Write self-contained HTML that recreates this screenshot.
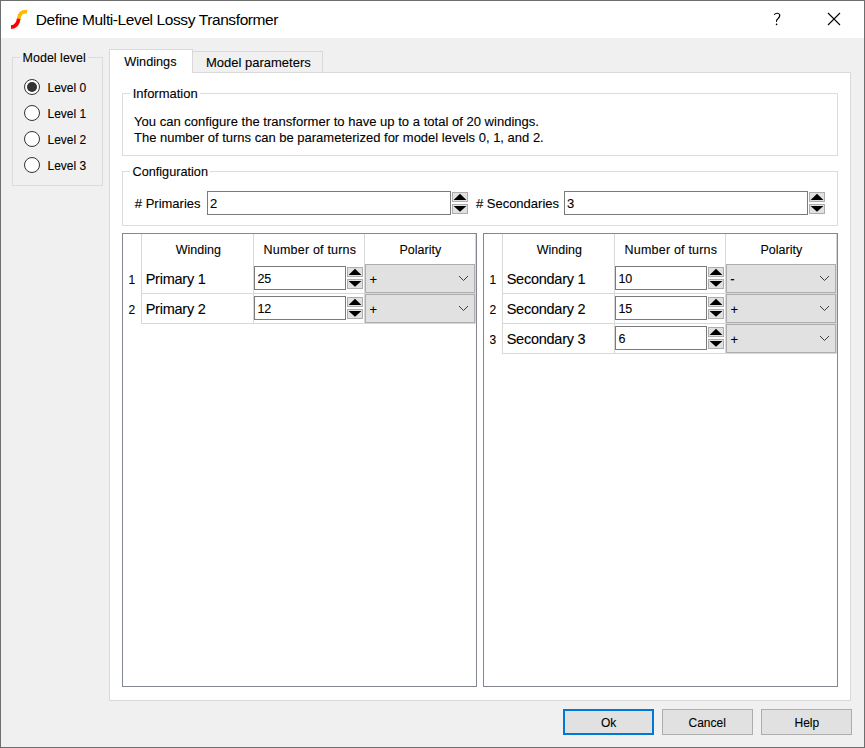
<!DOCTYPE html>
<html><head><meta charset="utf-8">
<style>
*{margin:0;padding:0;box-sizing:border-box}
html,body{width:865px;height:748px;overflow:hidden;background:#f0f0f0}
body{position:relative;font-family:"Liberation Sans",sans-serif;font-size:13px;color:#000}
.a{position:absolute}
.t{position:absolute;white-space:nowrap;line-height:1;-webkit-text-stroke:0.1px #000}
</style></head><body>
<div class="a" style="left:0px;top:0px;width:865px;height:748px;border:1px solid #6e6e6e;background:#f0f0f0"></div>
<div class="a" style="left:1px;top:1px;width:863px;height:37px;background:#fff"></div>
<svg class="a" style="left:10px;top:9px" width="18" height="21" viewBox="0 0 18 21">
<path d="M17 2.9 C12.8 2.2 9.6 3.6 8.7 9.9" stroke="#ffb900" stroke-width="3.7" fill="none" stroke-linecap="butt"/>
<path d="M8.7 9.8 C8.1 15 6 17.9 1 18.1" stroke="#ff0000" stroke-width="3.7" fill="none" stroke-linecap="butt"/>
</svg>
<div class="t" style="left:35.8px;top:11.88px;font-size:15.5px;letter-spacing:-0.4px;-webkit-text-stroke:0;">Define Multi-Level Lossy Transformer</div>
<svg class="a" style="left:766px;top:8px" width="24" height="24"><path d="M8.4 6.5 C9.6 5 12.6 4.6 13.6 6.6 C14.4 8.4 12.7 9.9 11.6 11 C10.6 12 10.3 12.6 10.5 13.4" stroke="#000" stroke-width="1.1" fill="none" stroke-linecap="round"/><circle cx="10.6" cy="16.3" r="0.85" fill="#000"/></svg>
<svg class="a" style="left:827px;top:12px" width="14" height="14" viewBox="0 0 14 14"><path d="M1 1L13 13M13 1L1 13" stroke="#000" stroke-width="1.1"/></svg>
<div class="a" style="left:12px;top:57px;width:91px;height:129px;border:1px solid #dcdcdc"></div>
<div class="a" style="left:20px;top:50px;width:68px;height:15px;background:#f0f0f0"></div>
<div class="t" style="left:22.6px;top:52.42px;font-size:12.5px;">Model level</div>
<div class="a" style="left:24px;top:79px;width:16px;height:16px;border:1px solid #333;border-radius:50%;background:#fff"></div>
<div class="a" style="left:27px;top:82px;width:10px;height:10px;border-radius:50%;background:#333"></div>
<div class="t" style="left:47.5px;top:82.34px;font-size:12px;">Level 0</div>
<div class="a" style="left:24px;top:105px;width:16px;height:16px;border:1px solid #333;border-radius:50%;background:#fff"></div>
<div class="t" style="left:47.5px;top:108.34px;font-size:12px;">Level 1</div>
<div class="a" style="left:24px;top:131px;width:16px;height:16px;border:1px solid #333;border-radius:50%;background:#fff"></div>
<div class="t" style="left:47.5px;top:134.34px;font-size:12px;">Level 2</div>
<div class="a" style="left:24px;top:157px;width:16px;height:16px;border:1px solid #333;border-radius:50%;background:#fff"></div>
<div class="t" style="left:47.5px;top:160.34px;font-size:12px;">Level 3</div>
<div class="a" style="left:109px;top:72px;width:742px;height:629px;background:#fff;border:1px solid #d9d9d9"></div>
<div class="a" style="left:192px;top:51px;width:131px;height:22px;background:#f0f0f0;border:1px solid #d9d9d9"></div>
<div class="t" style="left:206px;top:55.50px;font-size:13px;">Model parameters</div>
<div class="a" style="left:109px;top:49px;width:84px;height:24px;background:#fff;border:1px solid #d9d9d9;border-bottom:none"></div>
<div class="t" style="left:124.3px;top:56.25px;font-size:12.7px;">Windings</div>
<div class="a" style="left:122px;top:93px;width:716px;height:63px;border:1px solid #dcdcdc"></div>
<div class="a" style="left:130px;top:85px;width:70px;height:16px;background:#fff"></div>
<div class="t" style="left:132.7px;top:87.00px;font-size:13px;">Information</div>
<div class="t" style="left:134px;top:114.95px;font-size:13.05px;">You can configure the transformer to have up to a total of 20 windings.</div>
<div class="t" style="left:134px;top:131.00px;font-size:13.0px;">The number of turns can be parameterized for model levels 0, 1, and 2.</div>
<div class="a" style="left:122px;top:171px;width:716px;height:55px;border:1px solid #dcdcdc"></div>
<div class="a" style="left:130px;top:163px;width:80px;height:16px;background:#fff"></div>
<div class="t" style="left:132.5px;top:165.75px;font-size:12.7px;">Configuration</div>
<div class="t" style="left:134.8px;top:196.50px;font-size:13px;"># Primaries</div>
<div class="a" style="left:207px;top:191px;width:244px;height:24px;border:1px solid #7a7a7a;background:#fff"></div>
<div class="t" style="left:210px;top:196.50px;font-size:13px;">2</div>
<div class="a" style="left:452px;top:192px;width:16px;height:10px;background:#e1e1e1;border:1px solid #adadad"></div>
<div class="a" style="left:452px;top:204px;width:16px;height:10px;background:#e1e1e1;border:1px solid #adadad"></div>
<svg class="a" style="left:452px;top:192px" width="16" height="22"><path d="M1.6 8 L8.0 1.8 L14.4 8Z" fill="#000"/><path d="M1.6 14 L8.0 19.8 L14.4 14Z" fill="#000"/></svg>
<div class="t" style="left:475.9px;top:196.50px;font-size:13px;"># Secondaries</div>
<div class="a" style="left:564px;top:191px;width:244px;height:24px;border:1px solid #7a7a7a;background:#fff"></div>
<div class="t" style="left:567px;top:196.50px;font-size:13px;">3</div>
<div class="a" style="left:809px;top:192px;width:16px;height:10px;background:#e1e1e1;border:1px solid #adadad"></div>
<div class="a" style="left:809px;top:204px;width:16px;height:10px;background:#e1e1e1;border:1px solid #adadad"></div>
<svg class="a" style="left:809px;top:192px" width="16" height="22"><path d="M1.6 8 L8.0 1.8 L14.4 8Z" fill="#000"/><path d="M1.6 14 L8.0 19.8 L14.4 14Z" fill="#000"/></svg>
<div class="a" style="left:122px;top:233px;width:355px;height:454px;border:1px solid #828790;background:#fff"></div>
<div class="a" style="left:141px;top:234px;width:1px;height:90px;background:#d8d8d8"></div>
<div class="a" style="left:253px;top:234px;width:1px;height:90px;background:#d8d8d8"></div>
<div class="a" style="left:364px;top:234px;width:1px;height:90px;background:#d8d8d8"></div>
<div class="a" style="left:475px;top:234px;width:1px;height:90px;background:#d8d8d8"></div>
<div class="t" style="left:175.8px;top:243.92px;font-size:12.5px;">Winding</div>
<div class="t" style="left:263.6px;top:243.92px;font-size:12.5px;letter-spacing:0.2px;">Number of turns</div>
<div class="t" style="left:399.5px;top:243.92px;font-size:12.5px;">Polarity</div>
<div class="a" style="left:141px;top:293px;width:335px;height:1px;background:#d8d8d8"></div>
<div class="t" style="left:128.4px;top:273.84px;font-size:12px;">1</div>
<div class="t" style="left:145.7px;top:271.73px;font-size:14.5px;letter-spacing:-0.25px;">Primary 1</div>
<div class="a" style="left:254px;top:266px;width:92px;height:24px;border:1px solid #7a7a7a;background:#fff"></div>
<div class="t" style="left:257.4px;top:273.42px;font-size:12.5px;">25</div>
<div class="a" style="left:347px;top:267px;width:16px;height:10px;background:#e1e1e1;border:1px solid #adadad"></div>
<div class="a" style="left:347px;top:279px;width:16px;height:10px;background:#e1e1e1;border:1px solid #adadad"></div>
<svg class="a" style="left:347px;top:267px" width="16" height="22"><path d="M1.6 8 L8.0 1.8 L14.4 8Z" fill="#000"/><path d="M1.6 14 L8.0 19.8 L14.4 14Z" fill="#000"/></svg>
<div class="a" style="left:365px;top:264px;width:110px;height:29px;background:#e1e1e1;border:1px solid #adadad"></div>
<div class="t" style="left:369.5px;top:272.50px;font-size:13px;">+</div>
<svg class="a" style="left:458px;top:275px" width="11" height="7"><path d="M1 1 L5.5 5.5 L10 1" stroke="#3c3c3c" stroke-width="1" fill="none"/></svg>
<div class="a" style="left:141px;top:323px;width:335px;height:1px;background:#d8d8d8"></div>
<div class="t" style="left:128.4px;top:303.84px;font-size:12px;">2</div>
<div class="t" style="left:145.7px;top:301.73px;font-size:14.5px;letter-spacing:-0.25px;">Primary 2</div>
<div class="a" style="left:254px;top:296px;width:92px;height:24px;border:1px solid #7a7a7a;background:#fff"></div>
<div class="t" style="left:257.4px;top:303.42px;font-size:12.5px;">12</div>
<div class="a" style="left:347px;top:297px;width:16px;height:10px;background:#e1e1e1;border:1px solid #adadad"></div>
<div class="a" style="left:347px;top:309px;width:16px;height:10px;background:#e1e1e1;border:1px solid #adadad"></div>
<svg class="a" style="left:347px;top:297px" width="16" height="22"><path d="M1.6 8 L8.0 1.8 L14.4 8Z" fill="#000"/><path d="M1.6 14 L8.0 19.8 L14.4 14Z" fill="#000"/></svg>
<div class="a" style="left:365px;top:294px;width:110px;height:29px;background:#e1e1e1;border:1px solid #adadad"></div>
<div class="t" style="left:369.5px;top:302.50px;font-size:13px;">+</div>
<svg class="a" style="left:458px;top:305px" width="11" height="7"><path d="M1 1 L5.5 5.5 L10 1" stroke="#3c3c3c" stroke-width="1" fill="none"/></svg>
<div class="a" style="left:483px;top:233px;width:355px;height:454px;border:1px solid #828790;background:#fff"></div>
<div class="a" style="left:502px;top:234px;width:1px;height:120px;background:#d8d8d8"></div>
<div class="a" style="left:614px;top:234px;width:1px;height:120px;background:#d8d8d8"></div>
<div class="a" style="left:725px;top:234px;width:1px;height:120px;background:#d8d8d8"></div>
<div class="a" style="left:836px;top:234px;width:1px;height:120px;background:#d8d8d8"></div>
<div class="t" style="left:536.8px;top:243.92px;font-size:12.5px;">Winding</div>
<div class="t" style="left:624.6px;top:243.92px;font-size:12.5px;letter-spacing:0.2px;">Number of turns</div>
<div class="t" style="left:760.5px;top:243.92px;font-size:12.5px;">Polarity</div>
<div class="a" style="left:502px;top:293px;width:335px;height:1px;background:#d8d8d8"></div>
<div class="t" style="left:489.4px;top:273.84px;font-size:12px;">1</div>
<div class="t" style="left:506.7px;top:271.73px;font-size:14.5px;letter-spacing:-0.25px;">Secondary 1</div>
<div class="a" style="left:615px;top:266px;width:92px;height:24px;border:1px solid #7a7a7a;background:#fff"></div>
<div class="t" style="left:618.4px;top:273.42px;font-size:12.5px;">10</div>
<div class="a" style="left:708px;top:267px;width:16px;height:10px;background:#e1e1e1;border:1px solid #adadad"></div>
<div class="a" style="left:708px;top:279px;width:16px;height:10px;background:#e1e1e1;border:1px solid #adadad"></div>
<svg class="a" style="left:708px;top:267px" width="16" height="22"><path d="M1.6 8 L8.0 1.8 L14.4 8Z" fill="#000"/><path d="M1.6 14 L8.0 19.8 L14.4 14Z" fill="#000"/></svg>
<div class="a" style="left:726px;top:264px;width:110px;height:29px;background:#e1e1e1;border:1px solid #adadad"></div>
<div class="t" style="left:730.2px;top:271.60px;font-size:13px;">-</div>
<svg class="a" style="left:819px;top:275px" width="11" height="7"><path d="M1 1 L5.5 5.5 L10 1" stroke="#3c3c3c" stroke-width="1" fill="none"/></svg>
<div class="a" style="left:502px;top:323px;width:335px;height:1px;background:#d8d8d8"></div>
<div class="t" style="left:489.4px;top:303.84px;font-size:12px;">2</div>
<div class="t" style="left:506.7px;top:301.73px;font-size:14.5px;letter-spacing:-0.25px;">Secondary 2</div>
<div class="a" style="left:615px;top:296px;width:92px;height:24px;border:1px solid #7a7a7a;background:#fff"></div>
<div class="t" style="left:618.4px;top:303.42px;font-size:12.5px;">15</div>
<div class="a" style="left:708px;top:297px;width:16px;height:10px;background:#e1e1e1;border:1px solid #adadad"></div>
<div class="a" style="left:708px;top:309px;width:16px;height:10px;background:#e1e1e1;border:1px solid #adadad"></div>
<svg class="a" style="left:708px;top:297px" width="16" height="22"><path d="M1.6 8 L8.0 1.8 L14.4 8Z" fill="#000"/><path d="M1.6 14 L8.0 19.8 L14.4 14Z" fill="#000"/></svg>
<div class="a" style="left:726px;top:294px;width:110px;height:29px;background:#e1e1e1;border:1px solid #adadad"></div>
<div class="t" style="left:730.5px;top:302.50px;font-size:13px;">+</div>
<svg class="a" style="left:819px;top:305px" width="11" height="7"><path d="M1 1 L5.5 5.5 L10 1" stroke="#3c3c3c" stroke-width="1" fill="none"/></svg>
<div class="a" style="left:502px;top:353px;width:335px;height:1px;background:#d8d8d8"></div>
<div class="t" style="left:489.4px;top:333.84px;font-size:12px;">3</div>
<div class="t" style="left:506.7px;top:331.73px;font-size:14.5px;letter-spacing:-0.25px;">Secondary 3</div>
<div class="a" style="left:615px;top:326px;width:92px;height:24px;border:1px solid #7a7a7a;background:#fff"></div>
<div class="t" style="left:618.4px;top:333.42px;font-size:12.5px;">6</div>
<div class="a" style="left:708px;top:327px;width:16px;height:10px;background:#e1e1e1;border:1px solid #adadad"></div>
<div class="a" style="left:708px;top:339px;width:16px;height:10px;background:#e1e1e1;border:1px solid #adadad"></div>
<svg class="a" style="left:708px;top:327px" width="16" height="22"><path d="M1.6 8 L8.0 1.8 L14.4 8Z" fill="#000"/><path d="M1.6 14 L8.0 19.8 L14.4 14Z" fill="#000"/></svg>
<div class="a" style="left:726px;top:324px;width:110px;height:29px;background:#e1e1e1;border:1px solid #adadad"></div>
<div class="t" style="left:730.5px;top:332.50px;font-size:13px;">+</div>
<svg class="a" style="left:819px;top:335px" width="11" height="7"><path d="M1 1 L5.5 5.5 L10 1" stroke="#3c3c3c" stroke-width="1" fill="none"/></svg>
<div class="a" style="left:563px;top:709px;width:91px;height:26px;background:#e1e1e1;border:2px solid #0078d7"></div>
<div class="t" style="left:601px;top:716.84px;font-size:12px;">Ok</div>
<div class="a" style="left:662px;top:709px;width:91px;height:26px;background:#e1e1e1;border:1px solid #adadad"></div>
<div class="t" style="left:688.5px;top:716.84px;font-size:12px;">Cancel</div>
<div class="a" style="left:761px;top:709px;width:91px;height:26px;background:#e1e1e1;border:1px solid #adadad"></div>
<div class="t" style="left:794.5px;top:716.84px;font-size:12px;">Help</div>
</body></html>
